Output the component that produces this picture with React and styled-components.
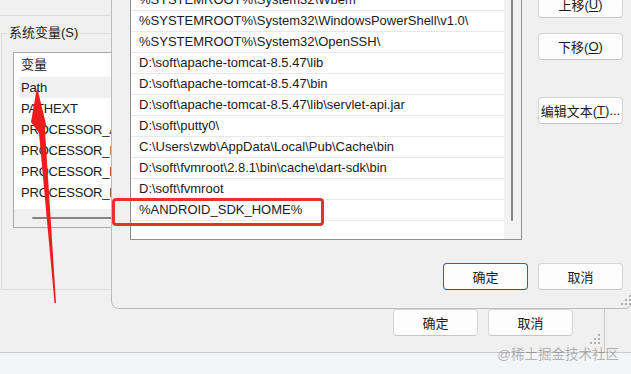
import React from 'react';
import styled, { createGlobalStyle } from 'styled-components';

const FONT = `"Liberation Sans", "Noto Sans CJK SC", sans-serif`;

const Global = createGlobalStyle`
  *, *::before, *::after { box-sizing: border-box; }
  html, body { margin: 0; padding: 0; background: #f0f0f0; }
  body { font-family: ${FONT}; }
`;

const Screen = styled.div`
  position: relative;
  width: 631px;
  height: 374px;
  overflow: hidden;
  display: flex;
  flex-direction: column;
  background: #f4f5f7;
  font-family: ${FONT};
  font-size: 13px;
  color: #1b1b1b;
`;

const Desk = styled.div`
  flex: none;
  height: 353px;
  display: flex;
  background: #f0f0f0;
  border-bottom: 1px solid #cbcbcb;
`;

const EnvDialog = styled.div`
  position: relative;
  width: 605px;
  display: flex;
  flex-direction: column;
  border-right: 1px solid #cbcbcb;
`;

const EnvTop = styled.div`
  height: 16px;
  border-bottom: 1px solid #d9d9d9;
`;

const GroupBox = styled.fieldset`
  margin: 9px 0 0 1px;
  padding: 0 0 61px 11px;
  width: 580px;
  min-width: 0;
  border: 1px solid #dcdcdc;
`;

const Legend = styled.legend`
  margin-left: -6px;
  padding: 0 2px;
  font-size: 13px;
  line-height: 16px;
`;

const VarList = styled.div`
  margin-top: 11px;
  width: 99px;
  height: 176px;
  border: 1px solid #a9a9a9;
  background: #fff;
  display: flex;
  flex-direction: column;
  overflow: hidden;
`;

const VarHeader = styled.div`
  height: 24px;
  line-height: 24px;
  padding-left: 7px;
`;

const VarRows = styled.div`
  flex: 1;
`;

const VarRow = styled.div`
  height: 21px;
  line-height: 21px;
  margin-left: 5px;
  padding-left: 2px;
  white-space: nowrap;
  overflow: hidden;
  letter-spacing: -0.2px;
  background: ${(p) => (p.$selected ? '#f0f0f0' : 'transparent')};
`;

const HScroll = styled.div`
  height: 18px;
  background: #f0f0f0;
  padding-top: 8px;
`;

const HThumb = styled.div`
  margin-left: 18px;
  width: 320px;
  height: 2px;
  border-radius: 1px;
  background: #858585;
`;

const Footer = styled.div`
  display: flex;
  justify-content: flex-end;
  gap: 10px;
  margin-top: ${(p) => p.$top}px;
  padding-right: ${(p) => p.$right}px;
`;

const Button = styled.div`
  width: 85px;
  height: 27px;
  display: flex;
  align-items: center;
  justify-content: center;
  background: #fdfdfd;
  border: 1px solid ${(p) => (p.$primary ? '#1a6cb3' : '#d5d5d5')};
  border-bottom-color: ${(p) => (p.$primary ? '#155a96' : '#c6c6c6')};
  border-radius: 4px;
  font-size: 13px;
  color: #1b1b1b;
  margin-top: ${(p) => p.$top || 0}px;
  & u { text-underline-offset: 2px; }
`;

const Filler = styled.div`
  flex: 1;
`;

const EditDialog = styled.div`
  position: absolute;
  left: 111px;
  top: -40px;
  width: 522px;
  height: 349px;
  background: #f0f0f0;
  border: 1px solid #bcbcbc;
  border-radius: 0 0 8px 8px;
  display: flex;
  flex-direction: column;
`;

const EditBody = styled.div`
  display: flex;
  gap: 16px;
  padding: 28px 9px 0 18px;
`;

const PathList = styled.div`
  width: 392px;
  height: 251px;
  border: 1px solid #8e8e8e;
  background: #fff;
  display: flex;
`;

const PathRows = styled.div`
  flex: 1;
  overflow: hidden;
`;

const PathRow = styled.div`
  height: 21px;
  line-height: 20px;
  padding-left: 8px;
  border-bottom: 1px solid #e8e8e8;
  white-space: nowrap;
`;

const VScroll = styled.div`
  width: 17px;
  background: #f3f3f3;
  padding-left: 7px;
`;

const VThumb = styled.div`
  width: 2px;
  height: 231px;
  border-radius: 1px;
  background: #858585;
`;

const SideButtons = styled.div`
  display: flex;
  flex-direction: column;
  margin-top: 2px;
`;

const Grip = styled.svg`
  position: absolute;
  right: ${(p) => p.$right}px;
  bottom: ${(p) => p.$bottom}px;
`;

const Highlight = styled.div`
  position: absolute;
  left: 112px;
  top: 198px;
  width: 212px;
  height: 28px;
  border: 3px solid #e5322b;
  border-radius: 4px;
`;

const Overlay = styled.svg`
  position: absolute;
  left: 0;
  top: 0;
  pointer-events: none;
`;

const Watermark = styled.div`
  position: absolute;
  right: 12px;
  bottom: 11px;
  font-family: "Liberation Sans", "Noto Sans CJK SC", sans-serif;
  font-size: 13.5px;
  line-height: 16px;
  color: rgba(90, 90, 90, 0.45);
`;

const paths = [
  '%SYSTEMROOT%\\System32\\Wbem',
  '%SYSTEMROOT%\\System32\\WindowsPowerShell\\v1.0\\',
  '%SYSTEMROOT%\\System32\\OpenSSH\\',
  'D:\\soft\\apache-tomcat-8.5.47\\lib',
  'D:\\soft\\apache-tomcat-8.5.47\\bin',
  'D:\\soft\\apache-tomcat-8.5.47\\lib\\servlet-api.jar',
  'D:\\soft\\putty0\\',
  'C:\\Users\\zwb\\AppData\\Local\\Pub\\Cache\\bin',
  'D:\\soft\\fvmroot\\2.8.1\\bin\\cache\\dart-sdk\\bin',
  'D:\\soft\\fvmroot',
  '%ANDROID_SDK_HOME%',
];

const vars = [
  'Path',
  'PATHEXT',
  'PROCESSOR_ARCHITECTURE',
  'PROCESSOR_IDENTIFIER',
  'PROCESSOR_LEVEL',
  'PROCESSOR_REVISION',
];

function GripDots() {
  const dots = [
    [8, 0], [8, 4], [4, 4], [8, 8], [4, 8], [0, 8],
  ];
  return dots.map(([x, y]) => (
    <rect key={`${x}-${y}`} x={x} y={y} width="2" height="2" fill="#b0b0b0" />
  ));
}

export default function App() {
  return (
    <>
      <Global />
      <Screen>
        <Desk>
          <EnvDialog>
            <EnvTop />
            <GroupBox>
              <Legend>系统变量(S)</Legend>
              <VarList>
                <VarHeader>变量</VarHeader>
                <VarRows>
                  {vars.map((v, i) => (
                    <VarRow key={v} $selected={i === 0}>{v}</VarRow>
                  ))}
                </VarRows>
                <HScroll>
                  <HThumb />
                </HScroll>
              </VarList>
            </GroupBox>
            <Footer $top={19} $right={31}>
              <Button>确定</Button>
              <Button>取消</Button>
            </Footer>
            <Grip $right={4} $bottom={8} width="10" height="10">
              <GripDots />
            </Grip>
          </EnvDialog>
          <Filler />
        </Desk>

        <EditDialog>
          <EditBody>
            <PathList>
              <PathRows>
                {paths.map((p) => (
                  <PathRow key={p}>{p}</PathRow>
                ))}
              </PathRows>
              <VScroll>
                <VThumb />
              </VScroll>
            </PathList>
            <SideButtons>
              <Button>上移(<u>U</u>)</Button>
              <Button $top={15}>下移(<u>O</u>)</Button>
              <Button $top={37}>编辑文本(<u>T</u>)...</Button>
            </SideButtons>
          </EditBody>
          <Footer $top={23} $right={9}>
            <Button $primary>确定</Button>
            <Button>取消</Button>
          </Footer>
          <Grip $right={1} $bottom={3} width="10" height="10">
            <GripDots />
          </Grip>
        </EditDialog>

        <Highlight />
        <Overlay width="631" height="374" viewBox="0 0 631 374">
          <polygon
            points="37,87 46,124 45,130 56,303 54.5,303 39,133 31,122"
            fill="#ee1c1c"
          />
        </Overlay>
        <Watermark>@稀土掘金技术社区</Watermark>
      </Screen>
    </>
  );
}
